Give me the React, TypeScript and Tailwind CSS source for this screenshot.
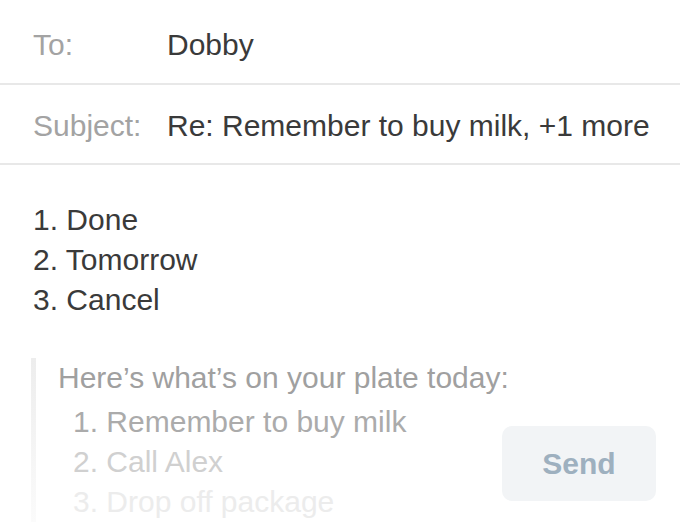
import React from 'react'

const replies = ['1. Done', '2. Tomorrow', '3. Cancel']

const quoted = [
  { text: '1. Remember to buy milk', color: 'text-[#ababab]' },
  { text: '2. Call Alex', color: 'text-[#d0d0d0]' },
  { text: '3. Drop off package', color: 'text-[#ececec]' },
]

function HeaderRow({ label, value, className }: { label: string; value: string; className: string }) {
  return (
    <div className={`flex items-center border-b-2 border-[#e8e8e8] pl-[33px] ${className}`}>
      <span className="w-[134px] shrink-0 text-[#a3a3a3]">{label}</span>
      <span className="text-[#3a3a3a]">{value}</span>
    </div>
  )
}

export default function App() {
  return (
    <div className="h-[526px] w-[680px] overflow-hidden bg-white font-['Liberation_Sans',Arial,sans-serif] text-[30px] leading-[40px]">
      <HeaderRow label="To:" value="Dobby" className="h-[85px] pt-[6px]" />
      <HeaderRow label="Subject:" value="Re: Remember to buy milk, +1 more" className="h-[80px] pt-[4px]" />

      {/* reply body */}
      <div className="px-[33px] pt-[35px] text-[#3a3a3a]">
        {replies.map((r) => (
          <div key={r}>{r}</div>
        ))}
      </div>

      {/* quoted original, send button floats over it */}
      <div className="relative mt-[38px] flex pl-[31px]">
        <div className="w-[5px] shrink-0 bg-linear-to-b from-[#ededed] to-[#fbfbfb]" />
        <div className="flex-1 pl-[22px]">
          <div className="whitespace-nowrap text-[#a0a0a0]">Here’s what’s on your plate today:</div>
          <div className="mt-[4px] pl-[15px]">
            {quoted.map((q) => (
              <div key={q.text} className={`whitespace-nowrap ${q.color}`}>
                {q.text}
              </div>
            ))}
          </div>
        </div>
        <button
          type="button"
          className="absolute right-[24px] top-[68px] h-[75px] w-[154px] rounded-[10px] bg-[#f2f4f6] text-[30px] font-bold text-[#9eb0bf]"
        >
          Send
        </button>
      </div>
    </div>
  )
}
